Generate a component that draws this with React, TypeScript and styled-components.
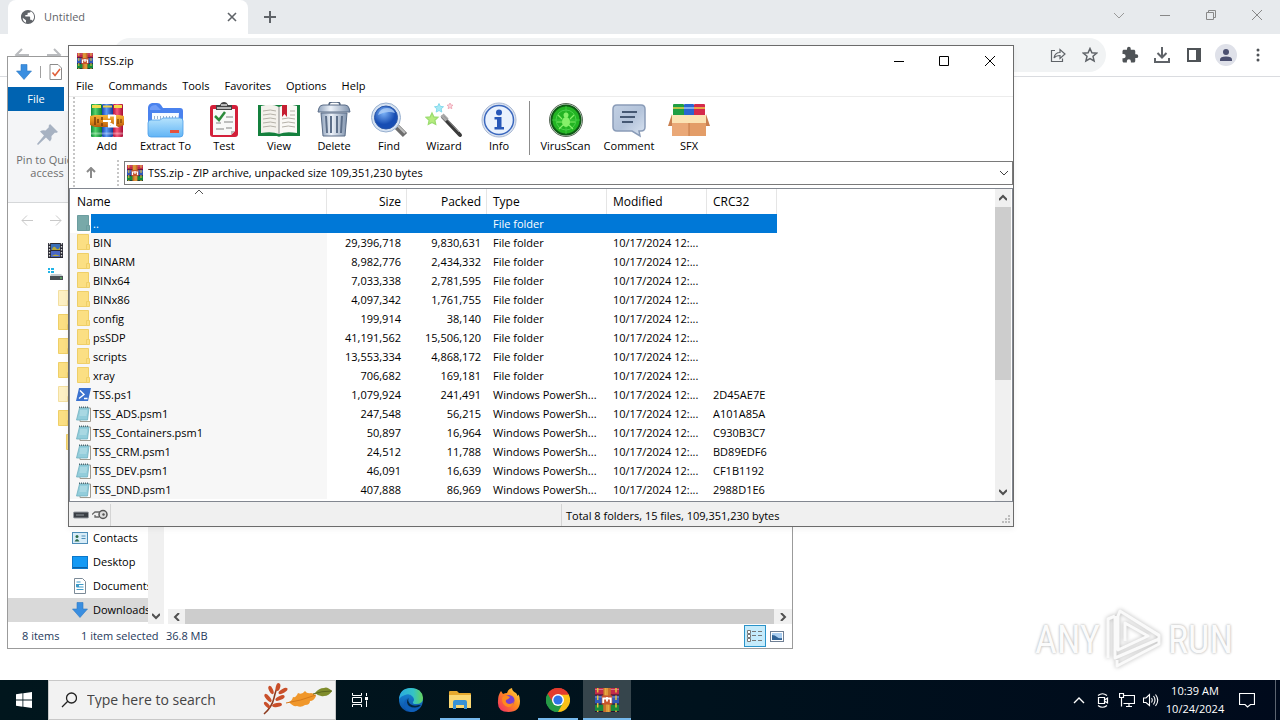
import React from "react";
import styled, { createGlobalStyle, css } from "styled-components";

const GlobalStyle = createGlobalStyle`
  * { box-sizing: border-box; }
  body {
    margin: 0;
    background: #fff;
    color: #000;
    font-family: "Open Sans", "Noto Sans", "Liberation Sans", sans-serif;
    font-size: 11px;
    line-height: 16px;
  }
  button, select, input {
    font: inherit;
    color: inherit;
    margin: 0;
    padding: 0;
    border: 0;
    border-radius: 0;
    background: none;
  }
  svg { display: block; flex: none; }
`;

/* ---------- desktop ---------- */

const Desktop = styled.div`
  position: relative;
  display: flex;
  flex-direction: column;
  min-height: 100vh;
  overflow: hidden;
`;

/* ---------- browser ---------- */

const Browser = styled.section`
  flex: 1;
  display: flex;
  flex-direction: column;
  background: #fff;
  color: #5f6368;
`;

const TabStrip = styled.header`
  display: flex;
  height: 34px;
  padding-left: 8px;
  background: #e7eaed;
`;

const Tab = styled.div`
  display: flex;
  align-items: center;
  gap: 8px;
  width: 240px;
  padding: 0 10px 0 12px;
  border-radius: 8px 8px 0 0;
  background: #fff;
`;

const TabTitle = styled.span`
  flex: 1;
`;

const IconButton = styled.button<{ $w: number; $h?: number }>`
  display: flex;
  align-items: center;
  justify-content: center;
  width: ${(p) => p.$w}px;
  height: ${(p) => p.$h ?? 30}px;
  flex: none;
`;

const Spacer = styled.div`
  flex: 1;
`;

const BrowserBar = styled.div`
  display: flex;
  align-items: center;
  height: 43px;
  padding: 0 6px;
  border-bottom: 1px solid #dadce0;
`;

const Omnibox = styled.div`
  flex: 1;
  display: flex;
  align-items: center;
  justify-content: flex-end;
  height: 34px;
  margin: 0 8px 0 11px;
  border-radius: 17px;
  background: #f1f3f4;
`;

const Avatar = styled.span`
  display: flex;
  align-items: center;
  justify-content: center;
  width: 22px;
  height: 22px;
  border-radius: 50%;
  background: #dfe1e9;
`;

const Watermark = styled.div`
  position: absolute;
  right: 47px;
  bottom: 46px;
  display: flex;
  align-items: center;
  gap: 5px;
  height: 68px;
  color: #fbfbfb;
  font-family: "Roboto Condensed", "Open Sans Condensed", "Liberation Sans", sans-serif;
  font-size: 38px;
  line-height: 40px;
  text-shadow: 0 0 3px #bbb, 0 0 2px #ccc;
`;

/* ---------- file explorer ---------- */

const Explorer = styled.section`
  position: absolute;
  left: 7px;
  top: 56px;
  width: 786px;
  display: flex;
  flex-direction: column;
  border: 1px solid #9b9b9b;
  background: #fff;
`;

const ExplorerTitle = styled.div`
  display: flex;
  align-items: center;
  gap: 8px;
  height: 30px;
  padding-left: 8px;
`;

const Divider = styled.span<{ $h: number; $c?: string }>`
  width: 1px;
  height: ${(p) => p.$h}px;
  background: ${(p) => p.$c ?? "#a0a0a0"};
`;

const FileTab = styled.button`
  width: 56px;
  height: 24px;
  background: #0063b1;
  color: #fff;
`;

const Ribbon = styled.div`
  height: 92px;
  border-bottom: 1px solid #d5d7d9;
  background: #f4f5f7;
`;

const PinButton = styled.button`
  display: flex;
  flex-direction: column;
  align-items: center;
  width: 78px;
  padding-top: 13px;
  color: #6d6d6d;
  line-height: 13px;

  svg { margin-bottom: 8px; }
`;

const ExplorerNav = styled.nav`
  display: flex;
  align-items: center;
  height: 35px;
  padding-left: 4px;
`;

const ExplorerBody = styled.div`
  display: flex;
  height: 386px;
`;

const Tree = styled.ul`
  width: 140px;
  margin: 0;
  padding: 0;
  list-style: none;
  overflow: hidden;
`;

const TreeItem = styled.li<{ $indent: number; $active?: boolean }>`
  display: flex;
  align-items: center;
  gap: 5px;
  height: 24px;
  padding-left: ${(p) => p.$indent}px;
  background: ${(p) => (p.$active ? "#d9d9d9" : "transparent")};
  white-space: nowrap;
`;

const TreeScroll = styled.div`
  display: flex;
  align-items: flex-end;
  width: 16px;
  background: #f0f0f0;
`;

const FilePane = styled.div`
  flex: 1;
  display: flex;
  flex-direction: column;
  justify-content: flex-end;
  padding-left: 4px;
`;

const HScroll = styled.div`
  display: flex;
  height: 15px;
  background: #f0f0f0;
`;

const HThumb = styled.div`
  flex: 1;
  background: #cdcdcd;
`;

const ExplorerStatus = styled.footer`
  display: flex;
  align-items: center;
  height: 24px;
  padding: 0 4px 0 14px;
  color: #1e395b;
`;

const StatusText = styled.span<{ $w: number }>`
  width: ${(p) => p.$w}px;
  white-space: nowrap;
`;

const ViewToggle = styled.button<{ $on?: boolean }>`
  display: flex;
  align-items: center;
  justify-content: center;
  width: 22px;
  height: 22px;
  ${(p) =>
    p.$on &&
    css`
      border: 1px solid #2a93c9;
      background: #c5ebfb;
    `}
`;

/* ---------- archive manager ---------- */

const Archive = styled.main`
  position: absolute;
  left: 68px;
  top: 45px;
  width: 946px;
  display: flex;
  flex-direction: column;
  border: 1px solid #6b6b6b;
  background: #fff;
  box-shadow: 0 2px 6px rgba(0, 0, 0, 0.06);
`;

const ArchiveTitle = styled.header`
  display: flex;
  align-items: center;
  height: 30px;
  padding-left: 8px;
`;

const TitleText = styled.h1`
  flex: 1;
  margin: 0 0 0 5px;
  font-size: 11px;
  font-weight: 400;
`;

const MenuBar = styled.nav`
  display: flex;
  gap: 15px;
  height: 21px;
  padding: 1px 7px 0;
  border-bottom: 1px solid #ececec;
`;

const MenuItem = styled.button`
  height: 18px;
`;

const ToolArea = styled.div`
  display: flex;
  padding-left: 4px;
`;

const Grip = styled.span<{ $h: number; $gap?: number }>`
  width: 2px;
  height: ${(p) => p.$h}px;
  margin-left: ${(p) => p.$gap ?? 0}px;
  flex: none;
  background: repeating-linear-gradient(#c6c6c6 0 2px, #fff 2px 4px);
`;

const ToolRows = styled.div`
  flex: 1;
  display: flex;
  flex-direction: column;
`;

const Toolbar = styled.div`
  display: flex;
  align-items: center;
  height: 62px;
  padding-left: 5px;
  gap: 1px;
`;

const ToolButton = styled.button<{ $w: number }>`
  display: flex;
  flex-direction: column;
  align-items: center;
  justify-content: space-between;
  width: ${(p) => p.$w}px;
  height: 52px;
  white-space: nowrap;
`;

const ToolDivider = styled.span`
  width: 1px;
  height: 54px;
  margin: 0 4px 0 2px;
  background: #8c8c8c;
`;

const AddressRow = styled.div`
  display: flex;
  align-items: center;
  height: 28px;
`;

const Address = styled.label`
  flex: 1;
  display: flex;
  align-items: center;
  height: 24px;
  margin-left: 5px;
  padding: 0 4px 0 2px;
  gap: 5px;
  border: 1px solid #7a7a7a;
`;

const PathSelect = styled.select`
  flex: 1;
  height: 22px;
  appearance: none;
  outline: 0;
`;

const ListFrame = styled.div`
  display: flex;
  border: 1px solid #828790;
  height: 314px;
`;

const ListArea = styled.div`
  flex: 1;
`;

const Table = styled.table`
  width: 707px;
  table-layout: fixed;
  border-collapse: separate;
  border-spacing: 0;
`;

const Th = styled.th<{ $right?: boolean }>`
  height: 25px;
  padding: ${(p) => (p.$right ? "0 5px 0 0" : "0 0 0 6px")};
  border-right: 1px solid #e5e5e5;
  font-size: 12px;
  font-weight: 400;
  text-align: ${(p) => (p.$right ? "right" : "left")};
`;

const NameHead = styled(Th)`
  position: relative;
  padding-left: 7px;
`;

const SortMark = styled.span`
  position: absolute;
  left: 125px;
  top: 0;
`;

const Row = styled.tr<{ $selected?: boolean }>`
  height: 19px;
  ${(p) =>
    p.$selected &&
    css`
      color: #fff;
      background: linear-gradient(to right, #fff 21px, #0078d7 21px);
    `}
`;

const Td = styled.td<{ $right?: boolean }>`
  height: 19px;
  padding: ${(p) => (p.$right ? "0 6px 0 0" : "0 0 0 6px")};
  text-align: ${(p) => (p.$right ? "right" : "left")};
  white-space: nowrap;
  line-height: 18px;
`;

const NameCell = styled(Td)<{ $selected?: boolean }>`
  padding: 0 0 0 6px;
  background: ${(p) => (p.$selected ? "transparent" : "#f7f7f7")};
`;

const NameInner = styled.span`
  display: flex;
  align-items: center;
  gap: 2px;
`;

const VScroll = styled.div`
  display: flex;
  flex-direction: column;
  width: 16px;
  margin-right: 1px;
  background: #f0f0f0;
`;

const VThumb = styled.div`
  height: 173px;
  background: #cdcdcd;
`;

const ArchiveStatus = styled.footer`
  display: flex;
  align-items: center;
  height: 24px;
  padding: 1px 2px 0 4px;
  background: #f0f0f0;
`;

const StatusIcons = styled.span`
  display: flex;
  align-items: center;
  gap: 3px;
  width: 37px;
`;

const StatusBlank = styled.span`
  flex: none;
  width: 450px;
`;

const StatusTotal = styled.span`
  flex: 1;
  padding: 2px 0 0 4px;
`;

/* ---------- taskbar ---------- */

const Taskbar = styled.footer`
  position: relative;
  display: flex;
  height: 40px;
  background: linear-gradient(to right, #01161d, #00121d 55%, #000a1c);
  color: #fff;
`;

const SearchBox = styled.label`
  display: flex;
  align-items: center;
  width: 288px;
  padding: 0 2px 0 12px;
  gap: 10px;
  border: 1px solid #c8c8c8;
  background: #f2f2f2;
  color: #2b2b2b;
`;

const SearchInput = styled.input`
  flex: 1;
  min-width: 0;
  outline: 0;
  font-size: 14px;

  &::placeholder { color: #444; opacity: 1; }
`;

const TaskGroup = styled.div`
  display: flex;
  gap: 1px;
  margin-left: 3px;
`;

const Task = styled.button<{ $open?: boolean; $active?: boolean }>`
  display: flex;
  align-items: center;
  justify-content: center;
  width: 48px;
  height: 40px;
  background: ${(p) => (p.$active ? "#36454c" : "transparent")};
  ${(p) =>
    p.$open &&
    css`
      background-image: linear-gradient(#76b9ed, #76b9ed);
      background-repeat: no-repeat;
      background-position: center bottom;
      background-size: ${p.$active ? 48 : 40}px 2px;
    `}
`;

const Clock = styled.time`
  display: flex;
  flex-direction: column;
  justify-content: center;
  width: 64px;
  text-align: center;
  line-height: 18px;
`;

const PeekEdge = styled.span`
  width: 5px;
  margin-left: 8px;
  border-left: 1px solid #5c6470;
`;

/* ---------- icons ---------- */

type LineProps = {
  d: string;
  size?: number;
  w?: number;
  color?: string;
};

const Line = ({ d, size = 12, w = 1, color = "currentColor" }: LineProps) => (
  <svg width={size} height={size} viewBox={`0 0 ${size} ${size}`} fill="none" stroke={color} strokeWidth={w}>
    <path d={d} />
  </svg>
);

const Globe = () => (
  <svg width="16" height="16" viewBox="0 0 24 24" fill="#5f6368">
    <path d="M12 1.500C6.200 1.500 1.500 6.200 1.500 12S6.200 22.500 12 22.500 22.500 17.800 22.500 12 17.800 1.500 12 1.500zM4 13l5 4v3.500C6 19.600 4 16.600 4 13zm14.500 4.700c-.4-1-1.200-1.700-2.300-1.700h-1v-3.500c0-.7-.5-1.200-1.200-1.200H8V9h2.300c.7 0 1.200-.5 1.200-1.200V5.500h2.300c1.300 0 2.300-1 2.300-2 3 1.500 5 4.700 5 8.500 0 2.200-1 4.300-2.600 5.700z" />
  </svg>
);

const Books = ({ size }: { size: number }) => (
  <svg width={size} height={size} viewBox="0 0 16 16">
    <rect x="0" y="0" width="16" height="5" fill="#c02a4b" />
    <rect x="0" y="5" width="16" height="6" fill="#3158b8" />
    <rect x="0" y="11" width="16" height="5" fill="#188a3c" />
    <path d="M0 1h16M0 6h16" stroke="#fff" strokeOpacity=".35" strokeWidth=".7" />
    <path d="M0 4.700h16M0 10.600h16M0 15.700h16" stroke="#2a1030" strokeWidth=".7" />
    <path d="M1.800 0v16M14 0v16" stroke="#e8c23a" strokeWidth="1" strokeDasharray="3 2" />
    <rect x="5.500" y="0" width="5" height="16" fill="#c9702a" />
    <path d="M6.800 0v5M8 0v16M9.200 11v5" stroke="#f2c14b" strokeWidth=".7" />
    <rect x="4.500" y="5" width="7" height="6" fill="#c7552d" />
    <path d="M5.500 10V7h5v3M8 6v3" fill="none" stroke="#fff" strokeWidth="1.200" />
  </svg>
);

const AddIcon = () => (
  <svg width="36" height="36" viewBox="0 0 36 36">
    <defs>
      <linearGradient id="bg"><stop stopColor="#0b8a3c" /><stop offset=".4" stopColor="#57d46b" /><stop offset="1" stopColor="#067a34" /></linearGradient>
      <linearGradient id="bb"><stop stopColor="#1740b0" /><stop offset=".4" stopColor="#5c9bf5" /><stop offset="1" stopColor="#123a9a" /></linearGradient>
      <linearGradient id="br"><stop stopColor="#b0103a" /><stop offset=".4" stopColor="#f65a7c" /><stop offset="1" stopColor="#a80d35" /></linearGradient>
      <linearGradient id="belt" x2="0" y2="1"><stop stopColor="#f6b83a" /><stop offset=".5" stopColor="#e08a1c" /><stop offset="1" stopColor="#b85c0e" /></linearGradient>
    </defs>
    <rect x="2" y="2" width="11" height="33" rx="1" fill="url(#bg)" />
    <rect x="13" y="2" width="11" height="33" rx="1" fill="url(#bb)" />
    <rect x="24" y="2" width="10" height="33" rx="1" fill="url(#br)" />
    <path d="M3 4.500h9M25 4.500h8" stroke="#f2dc4a" strokeWidth="3" />
    <path d="M14 4.500h9" stroke="#e9cf4a" strokeWidth="2" />
    <path d="M2 31.500h32" stroke="#fff" strokeOpacity=".35" strokeWidth="2" />
    <path d="M1 14l5-1h24l5 1v9l-5 2H6l-5-2z" fill="url(#belt)" />
    <path d="M6 15v8M9 17v4M13 15v3M13 21v3" stroke="#7a3d08" strokeWidth="1.500" />
    <path d="M26 13.500h-6v3M20 21v3.500h6zM26 13v12" fill="none" stroke="#fff" strokeWidth="2.200" />
    <path d="M14 19h8" stroke="#fff" strokeWidth="2" />
    <path d="M29 17v5M32 17v4" stroke="#7a3d08" strokeWidth="1.200" />
  </svg>
);

const ExtractIcon = () => (
  <svg width="38" height="36" viewBox="0 0 38 36">
    <defs><linearGradient id="ef" x2="0" y2="1"><stop stopColor="#b5e2fc" /><stop offset="1" stopColor="#62b5f6" /></linearGradient></defs>
    <path d="M1 6q0-4 4-5h5q3 0 4 2l2 3h17q3 0 3 3v18H1z" fill="#4a82ee" />
    <path d="M3 6q1-3 6-3l5 5H3z" fill="#6f9df7" />
    <path d="M5 11h27l-1 11H5z" fill="#f7fbff" />
    <path d="M7.500 14v3M10.500 14v3M13.500 14v3M16.500 14v3M19.500 14v3M22.500 14v3M25.500 14v3M28.500 14v3" stroke="#9ab0cc" />
    <path d="M1 21q0-3 3-3h9l3-2h17q3 0 3 3v13q0 3-3 3H4q-3 0-3-3z" fill="url(#ef)" stroke="#4a9de8" strokeWidth=".8" />
    <rect x="23" y="28" width="9" height="3" fill="#e4513d" />
  </svg>
);

const TestIcon = () => (
  <svg width="36" height="36" viewBox="0 0 36 36">
    <rect x="4" y="3" width="28" height="32" rx="3" fill="#d31f39" />
    <path d="M7 7h22v22l-4 4H7z" fill="#f8f8f8" />
    <path d="M29 29h-4v4z" fill="#bbb" />
    <path d="M10 3h4q1-3 4-3t4 3h4v5H10z" fill="#444" />
    <path d="M11 6h14M15 3h6" stroke="#ddd" strokeWidth="1.500" />
    <path d="M9 14l4 4 6-8" fill="none" stroke="#2c8a3b" strokeWidth="2.500" />
    <path d="M20 15h7M18 20h9M10 21h5M10 27h8M20 26h6" stroke="#a9a9a9" strokeWidth="1.500" />
  </svg>
);

const ViewIcon = () => (
  <svg width="44" height="36" viewBox="0 0 44 36">
    <path d="M1 3h42v31H24q-2 1.500-4 0H1z" fill="#14803d" />
    <path d="M4 4q11-3 18 1v27q-7-3-18-1z" fill="#f3f1ec" />
    <path d="M40 4q-11-3-18 1v27q7-3 18-1z" fill="#faf9f6" />
    <path d="M22 5v27" stroke="#888" />
    <path d="M6 9q8-2 13 0M6 13q8-2 13 0M6 17q8-2 13 0M6 21q8-2 13 0M6 25q8-2 13 0M25 17q6-2 13 0M25 21q6-2 13 0M25 25q6-2 13 0M33 9h5M33 13h5" fill="none" stroke="#b5b1a8" />
    <path d="M25 3h5v12l-2.500-3L25 15z" fill="#c61f32" />
  </svg>
);

const TrashIcon = () => (
  <svg width="36" height="36" viewBox="0 0 36 36">
    <defs><linearGradient id="tr"><stop stopColor="#8fa2bb" /><stop offset=".4" stopColor="#eef3fa" /><stop offset="1" stopColor="#8093ad" /></linearGradient></defs>
    <path d="M13 3q0-3 3-3h5q3 0 3 3" fill="none" stroke="#53657f" strokeWidth="1.500" />
    <path d="M3 6q1-3 4-3h22q3 0 4 3l1 4H2z" fill="url(#tr)" stroke="#5b6d87" />
    <path d="M5 11h26l-2 23H7z" fill="url(#tr)" stroke="#5b6d87" />
    <path d="M10 14l1 17M15 14v17M21 14v17M26 14l-1 17" stroke="#5d6f89" strokeWidth="2" />
  </svg>
);

const FindIcon = () => (
  <svg width="38" height="36" viewBox="0 0 38 36">
    <defs><radialGradient id="fi" cx=".4" cy=".3"><stop stopColor="#7bb2f7" /><stop offset="1" stopColor="#174db3" /></radialGradient></defs>
    <path d="M26 24l9 9" stroke="#6d6d6d" strokeWidth="6" />
    <path d="M27 23l8 8" stroke="#bdbdbd" strokeWidth="2" />
    <circle cx="16" cy="15.500" r="14.500" fill="#d7e3f2" stroke="#98b0d0" />
    <circle cx="16" cy="15.500" r="11.500" fill="url(#fi)" stroke="#2b57a8" />
    <path d="M8 13q2-7 9-7 6 0 8 5-8-3-17 2z" fill="#bcd9fb" opacity=".7" />
  </svg>
);

const star = "M0-5l1.500 3.200 3.500.4-2.600 2.400.7 3.500L0 2.800l-3.100 1.700.7-3.500L-5-1.400l3.500-.4z";

const WizardIcon = () => (
  <svg width="38" height="36" viewBox="0 0 38 36">
    <path d="M18 15l17 18" stroke="#3b3b3b" strokeWidth="4" strokeLinecap="round" />
    <path d="M17 13l5 5" stroke="#a9a9a9" strokeWidth="4.500" />
    <path d="M19 14l15 16" stroke="#999" strokeWidth="1" />
    <path d={star} transform="translate(7 17) scale(1.200)" fill="#b6ec7e" stroke="#9bdc70" />
    <path d={star} transform="translate(14 6) scale(.9)" fill="#a6e9f5" stroke="#7dd6ea" />
    <path d={star} transform="translate(25 4) scale(.6)" fill="#fbd6dd" stroke="#e88a9c" />
  </svg>
);

const InfoIcon = () => (
  <svg width="36" height="36" viewBox="0 0 36 36">
    <circle cx="18" cy="18" r="17" fill="#dde5f2" stroke="#aab9d3" />
    <circle cx="18" cy="18" r="14.500" fill="#eaf2fd" stroke="#3b68be" strokeWidth="1.500" />
    <circle cx="18" cy="10.500" r="3" fill="#2757b8" />
    <path d="M13.500 15h7v10h2.500v2.500h-9.500V25H16v-7.500h-2.500z" fill="#2757b8" />
  </svg>
);

const VirusIcon = () => (
  <svg width="36" height="36" viewBox="0 0 36 36">
    <circle cx="18" cy="18" r="16.500" fill="#d7e0d7" stroke="#5a6b5a" />
    <circle cx="18" cy="18" r="14.500" fill="#23b423" stroke="#0d5a14" strokeWidth="2" />
    <circle cx="18" cy="18" r="10" fill="none" stroke="#4bd04b" />
    <path d="M4 18h28M18 4v28" stroke="#4bd04b" strokeWidth=".7" />
    <ellipse cx="18" cy="20" rx="4" ry="5" fill="#86f06a" />
    <circle cx="18" cy="13" r="2.500" fill="#86f06a" />
    <path d="M14 17l-4-4M22 17l4-4M14 20H9M22 20h5M15 23l-4 4M21 23l4 4" stroke="#86f06a" strokeWidth="1.200" />
  </svg>
);

const CommentIcon = () => (
  <svg width="36" height="36" viewBox="0 0 36 36">
    <defs><linearGradient id="cm" x2="1" y2="1"><stop stopColor="#c2d0e3" /><stop offset=".5" stopColor="#b3c3da" /><stop offset="1" stopColor="#dbe5f2" /></linearGradient></defs>
    <path d="M6 3h24q4 0 4 4v18q0 4-4 4h-2l1 5-8-5H6q-4 0-4-4V7q0-4 4-4z" fill="url(#cm)" stroke="#8a9cb8" strokeWidth="1.500" />
    <path d="M11 10h15M9 15h15M11 20h11" stroke="#455873" strokeWidth="1.800" />
  </svg>
);

const SfxIcon = () => (
  <svg width="42" height="36" viewBox="0 0 42 36">
    <rect x="5" y="2" width="11" height="13" rx="1" fill="#1f9e44" />
    <rect x="16" y="2" width="10" height="13" rx="1" fill="#2a66d0" />
    <rect x="26" y="2" width="11" height="13" rx="1" fill="#d52a4c" />
    <path d="M5 6h11M26 6h11" stroke="#f0d24a" strokeWidth="1.500" />
    <path d="M16 6h10" stroke="#9ec6fa" strokeWidth="1.500" />
    <path d="M4 13h34v10H4z" fill="#fbe3b4" />
    <path d="M4 21h34v13H4z" fill="#eaa877" />
    <path d="M21 21h17v13H21z" fill="#e39d68" />
    <path d="M4 12v12H0zM38 12v12h4z" fill="#c98050" />
    <path d="M21 21v13" stroke="#c57a48" />
  </svg>
);

const Folder = ({ tone = "#fbdf83", edge = "#efcf68" }: { tone?: string; edge?: string }) => (
  <svg width="15" height="17" viewBox="0 0 15 17">
    <path d="M1.500 .5h11v15h-11z" fill={tone} stroke={edge} />
    <path d="M10.500 10.500h3v5h-3z" fill={tone} stroke={edge} />
  </svg>
);

const PowerShell = () => (
  <svg width="15" height="13" viewBox="0 0 15 13">
    <path d="M3 0h12l-3 13H0z" fill="#3b72cf" />
    <path d="M4 2.500l4 4-5 4M8 10.500h3.500" fill="none" stroke="#fff" strokeWidth="1.400" />
  </svg>
);

const Notebook = () => (
  <svg width="15" height="16" viewBox="0 0 15 16">
    <path d="M4 2h10.500v13.500H4z" fill="#fff" stroke="#a09b90" />
    <path d="M3.500 2h9.500L11.500 14H.5z" fill="#93cddb" stroke="#6fb0c0" strokeWidth=".8" />
    <path d="M3 1.200h10" stroke="#4c6d78" strokeWidth="1.500" strokeDasharray="1 1" />
    <path d="M4 5h7M4 7h7M3.500 9h7" stroke="#bfe3ea" />
  </svg>
);

const Arrow = () => (
  <svg width="16" height="16" viewBox="0 0 16 16">
    <path d="M5 .5h6V7h4.500L8 15.500.5 7H5z" fill="#3a8ee0" stroke="#2d79c4" strokeWidth=".6" />
  </svg>
);

const CheckDoc = () => (
  <svg width="13" height="16" viewBox="0 0 13 16">
    <path d="M1 .5h8L12.500 4v11.500H1z" fill="#fff" stroke="#8b8b8b" />
    <path d="M3.500 8.500l2.500 3L11 5" fill="none" stroke="#e0603a" strokeWidth="1.600" />
  </svg>
);

const Pin = () => (
  <svg width="21" height="21" viewBox="0 0 21 21">
    <path d="M13 0l8 8-2 1-1-.5-3.500 3.500q.8 3-1.500 5.500l-4-4L1 21l-1-1 7-8.500-4-4Q5.500 5.500 8.500 6.500L12 3l-.5-1z" fill="#a7b2c2" />
  </svg>
);

const Video = () => (
  <svg width="15" height="15" viewBox="0 0 15 15">
    <rect width="15" height="15" fill="#2b2b35" />
    <path d="M1.500 0v15M13.500 0v15" stroke="#d8d8d8" strokeWidth="1.300" strokeDasharray="1.500 1.500" />
    <rect x="3" y="1" width="9" height="6" fill="#3a6fb8" />
    <rect x="3" y="8" width="9" height="6" fill="#4a67c4" />
    <path d="M4 6q2-4 4-1t4-1v3H4zM4 13q3-3 8 0z" fill="#b5a83a" />
  </svg>
);

const Drive = () => (
  <svg width="16" height="15" viewBox="0 0 16 15">
    <path d="M0 1h2v2H0zM3 1h3v2H3zM0 4h2v2H0zM3 4h3v2H3z" fill="#20b4e8" />
    <path d="M3 7h10l2 2H2z" fill="#c5cbd0" />
    <path d="M2 9h13v4H2z" fill="#4a5055" />
    <path d="M12 11h2" stroke="#67e36a" />
  </svg>
);

const Contacts = () => (
  <svg width="16" height="12" viewBox="0 0 16 12">
    <rect x=".5" y=".5" width="15" height="11" fill="#d7ecf8" stroke="#4d8db8" />
    <circle cx="5" cy="4.500" r="1.500" fill="#2d6b4c" />
    <path d="M2.500 9.500Q5 4.500 7.500 9.500z" fill="#2d6b4c" />
    <path d="M9.500 4h4M9.500 6.500h4" stroke="#4d8db8" />
  </svg>
);

const DesktopIcon = () => (
  <svg width="16" height="13" viewBox="0 0 16 13">
    <rect x=".5" y=".5" width="15" height="12" fill="#1299f5" stroke="#0b77c9" />
    <path d="M1 11.500h14" stroke="#0b5fa5" />
  </svg>
);

const DocIcon = () => (
  <svg width="16" height="16" viewBox="0 0 16 16">
    <path d="M2.500.5h8l3 3v12h-11z" fill="#fff" stroke="#7c8b98" />
    <path d="M4.500 4h4M4.500 6.500h7M4.500 9h7M4.500 11.500h7" stroke="#3e9bc9" />
    <path d="M4 6h3v3H4z" fill="#3e9bc9" />
  </svg>
);

const ListViewIcon = () => (
  <svg width="16" height="14" viewBox="0 0 16 14" fill="none" stroke="#777">
    <path d="M.5 1.500h3v3h-3zM.5 5.500h3v3h-3zM.5 9.500h3v3h-3z" fill="#fff" />
    <path d="M5 2.500h4M11 2.500h4M5 6.500h4M11 6.500h4M5 11.500h4M11 11.500h4" />
  </svg>
);

const ThumbViewIcon = () => (
  <svg width="14" height="11" viewBox="0 0 14 11">
    <rect x=".5" y=".5" width="13" height="10" fill="#fff" stroke="#6f7f94" />
    <path d="M2 2h10v7H2z" fill="#a9cdf0" />
    <path d="M2 4q3 0 5 2t5 1v2H2z" fill="#2f6296" />
  </svg>
);

const Leaves = () => (
  <svg width="70" height="34" viewBox="0 0 70 34">
    <path d="M1 31Q9 24 11 15T15 3" fill="none" stroke="#8c3a1e" strokeWidth="1.500" />
    <g fill="#c94f2a">
      <ellipse cx="15" cy="4" rx="2.200" ry="4" transform="rotate(15 15 4)" />
      <ellipse cx="8" cy="7" rx="2" ry="4.500" transform="rotate(-25 8 7)" />
      <ellipse cx="20" cy="8" rx="2" ry="5" transform="rotate(60 20 8)" />
      <ellipse cx="5" cy="15" rx="2" ry="5" transform="rotate(-40 5 15)" />
      <ellipse cx="17" cy="15" rx="2" ry="5" transform="rotate(65 17 15)" />
      <ellipse cx="4" cy="22" rx="1.800" ry="4" transform="rotate(-45 4 22)" />
      <ellipse cx="14" cy="22" rx="2" ry="5" transform="rotate(80 14 22)" />
    </g>
    <path d="M26 19q3-1 4-5 3 1 5-4 4 2 7-2 2 3 6 2 3 0 5 3-2 5-6 5 0 4-5 4-4 3-8 1-4 1-8-4z" fill="#f0972b" />
    <path d="M23 20q14-2 30-8" fill="none" stroke="#d57a1c" />
    <path d="M52 10q4-5 9-5 3-2 8 3-3 5-8 5-5 1-9-3z" fill="#7f8c2c" />
    <path d="M50 11q8-3 19-3" fill="none" stroke="#5c671d" />
  </svg>
);

const TaskView = () => (
  <svg width="18" height="16" viewBox="0 0 18 16" fill="none" stroke="#fff">
    <path d="M1.500 1V3.500h9V1M1.500 15v-2.500h9V15M1.500 5.500h9v5h-9zM15.500 1v3M15.500 8.500V15" />
    <path d="M14 5h3v3h-3z" fill="#fff" stroke="none" />
  </svg>
);

const Edge = () => (
  <svg width="24" height="24" viewBox="0 0 24 24">
    <defs>
      <linearGradient id="e1" x2="1"><stop stopColor="#2aa9e0" /><stop offset=".6" stopColor="#35c3c5" /><stop offset="1" stopColor="#65d35a" /></linearGradient>
      <linearGradient id="e2" x2="0" y2="1"><stop stopColor="#1b8fdc" /><stop offset="1" stopColor="#0b4fa5" /></linearGradient>
    </defs>
    <circle cx="12" cy="12" r="12" fill="url(#e2)" />
    <path d="M0 11Q1 0 12 0q11 0 12 10 0 6-7 6-4 0-3-2 2-2 0-5-3-4-8-2-4 1-6 4z" fill="url(#e1)" />
    <path d="M9 10q-2 5 2 9 5 3 11-1-4 6-10 6-7-2-7-8 0-4 4-6z" fill="#0f5fb8" />
    <path d="M10 9.500q-2 3 1 6.500 4 3 9 1l2 .5q-3 2-6 2-7 0-8-5 0-3 2-5z" fill="#03253d" />
  </svg>
);

const ExplorerIcon = () => (
  <svg width="22" height="20" viewBox="0 0 22 20">
    <path d="M0 2q0-1 1-1h7l2 2h11q1 0 1 1v14H0z" fill="#e6a92e" />
    <path d="M0 5h22v13H0z" fill="#fbd873" />
    <path d="M4 18v-6q0-2 2-2h10q2 0 2 2v7h-3v-4H7v4H4z" fill="#3a93d6" />
  </svg>
);

const Firefox = () => (
  <svg width="24" height="24" viewBox="0 0 24 24">
    <defs><linearGradient id="ff" x1="1" x2="0" y2="1"><stop stopColor="#ffe14a" /><stop offset=".45" stopColor="#ff8a1e" /><stop offset="1" stopColor="#f0246b" /></linearGradient></defs>
    <path d="M4 3l2 3q2-1 4-1 1-4 5-5 0 3 4 5 1 1 1.500 3l1-1.500Q23 9 23 13q0 11-11.500 11T1 13Q1 7 4 3z" fill="url(#ff)" />
    <circle cx="12" cy="12.500" r="5.500" fill="#7a3fd1" />
    <path d="M5 10q2-3 6-2l2 1q-2 3-4 3-1 3 3 4 4 0 5-3-1 6-6 6-6-1-6-9z" fill="#ff8a1e" />
  </svg>
);

const ChromeIcon = () => (
  <svg width="24" height="24" viewBox="0 0 24 24">
    <path d="M12 12L1.600 6A12 12 0 0 1 22.400 6z" fill="#e33b2e" />
    <path d="M12 12L22.400 6A12 12 0 0 1 12 24z" fill="#fbc116" />
    <path d="M12 12v12A12 12 0 0 1 1.600 6z" fill="#269a46" />
    <path d="M12 6.500H22.600L17 15z" fill="#fbc116" />
    <path d="M12 6.500h10.600L22.400 6A12 12 0 0 0 1.600 6L7 15z" fill="#e33b2e" />
    <path d="M17 15l-5 9A12 12 0 0 1 1.600 6L7 15z" fill="#269a46" />
    <circle cx="12" cy="12" r="6" fill="#fff" />
    <circle cx="12" cy="12" r="4.600" fill="#2f73e8" />
  </svg>
);

const LogoArt = styled.svg`
  filter: drop-shadow(0 0 2px #b5b5b5);
`;

const RunLogo = () => (
  <LogoArt width="58" height="64" viewBox="0 0 58 64" fill="none" stroke="#fafafa" strokeWidth="3">
    <path d="M3 50V11L10 8M15 3l38 24M10 8v42l44-19M12 52v6l42-22v-9L15 3l-2 5v34l30-14L20 15v18" strokeLinejoin="round" />
  </LogoArt>
);

/* ---------- data ---------- */

type Entry = { name: string; kind: "up" | "dir" | "ps" | "mod"; size?: string; packed?: string; crc?: string };

const entries: Entry[] = [
  { name: "..", kind: "up" },
  { name: "BIN", kind: "dir", size: "29,396,718", packed: "9,830,631" },
  { name: "BINARM", kind: "dir", size: "8,982,776", packed: "2,434,332" },
  { name: "BINx64", kind: "dir", size: "7,033,338", packed: "2,781,595" },
  { name: "BINx86", kind: "dir", size: "4,097,342", packed: "1,761,755" },
  { name: "config", kind: "dir", size: "199,914", packed: "38,140" },
  { name: "psSDP", kind: "dir", size: "41,191,562", packed: "15,506,120" },
  { name: "scripts", kind: "dir", size: "13,553,334", packed: "4,868,172" },
  { name: "xray", kind: "dir", size: "706,682", packed: "169,181" },
  { name: "TSS.ps1", kind: "ps", size: "1,079,924", packed: "241,491", crc: "2D45AE7E" },
  { name: "TSS_ADS.psm1", kind: "mod", size: "247,548", packed: "56,215", crc: "A101A85A" },
  { name: "TSS_Containers.psm1", kind: "mod", size: "50,897", packed: "16,964", crc: "C930B3C7" },
  { name: "TSS_CRM.psm1", kind: "mod", size: "24,512", packed: "11,788", crc: "BD89EDF6" },
  { name: "TSS_DEV.psm1", kind: "mod", size: "46,091", packed: "16,639", crc: "CF1B1192" },
  { name: "TSS_DND.psm1", kind: "mod", size: "407,888", packed: "86,969", crc: "2988D1E6" },
];

const tools = [
  { label: "Add", w: 54, icon: <AddIcon /> },
  { label: "Extract To", w: 61, icon: <ExtractIcon /> },
  { label: "Test", w: 54, icon: <TestIcon /> },
  { label: "View", w: 54, icon: <ViewIcon /> },
  { label: "Delete", w: 54, icon: <TrashIcon /> },
  { label: "Find", w: 54, icon: <FindIcon /> },
  { label: "Wizard", w: 54, icon: <WizardIcon /> },
  { label: "Info", w: 54, icon: <InfoIcon /> },
];

const extraTools = [
  { label: "VirusScan", w: 61, icon: <VirusIcon /> },
  { label: "Comment", w: 64, icon: <CommentIcon /> },
  { label: "SFX", w: 54, icon: <SfxIcon /> },
];

const pale = { tone: "#fdf0c4", edge: "#f3dfa0" };

const tree: { indent: number; icon: React.ReactNode; label?: string; active?: boolean }[] = [
  { indent: 40, icon: <Video /> },
  { indent: 40, icon: <Drive /> },
  { indent: 49, icon: <Folder {...pale} /> },
  { indent: 49, icon: <Folder /> },
  { indent: 49, icon: <Folder /> },
  { indent: 49, icon: <Folder /> },
  { indent: 49, icon: <Folder {...pale} /> },
  { indent: 49, icon: <Folder /> },
  { indent: 57, icon: <Folder /> },
  { indent: 64, icon: <Folder /> },
  { indent: 64, icon: <Folder /> },
  { indent: 64, icon: <Folder /> },
  { indent: 64, icon: <Contacts />, label: "Contacts" },
  { indent: 64, icon: <DesktopIcon />, label: "Desktop" },
  { indent: 64, icon: <DocIcon />, label: "Documents" },
  { indent: 64, icon: <Arrow />, label: "Downloads", active: true },
];

const entryIcon = (kind: Entry["kind"]) => {
  if (kind === "up") return <Folder tone="#78a9a9" edge="#6c9d9f" />;
  if (kind === "dir") return <Folder />;
  return kind === "ps" ? <PowerShell /> : <Notebook />;
};

/* ---------- windows ---------- */

const BrowserWindow = () => (
  <Browser>
    <TabStrip>
      <Tab>
        <Globe />
        <TabTitle>Untitled</TabTitle>
        <IconButton $w={12} $h={16} aria-label="Close tab"><Line d="M2 2l8 8M10 2l-8 8" w={1.6} /></IconButton>
      </Tab>
      <IconButton $w={44} $h={34} aria-label="New tab"><Line d="M6 0v12M0 6h12" w={2} /></IconButton>
      <Spacer />
      <IconButton $w={46} aria-label="Search tabs"><Line d="M1 4l5 5 5-5" color="#999" /></IconButton>
      <IconButton $w={46} aria-label="Minimize"><Line d="M1 6.500h10" color="#888" /></IconButton>
      <IconButton $w={46} aria-label="Restore"><Line d="M1.500 3.500h7v7h-7zM3.500 3V1.500h7v7H9" color="#888" /></IconButton>
      <IconButton $w={46} aria-label="Close"><Line d="M1 1l10 10M11 1L1 11" color="#888" /></IconButton>
    </TabStrip>
    <BrowserBar>
      <IconButton $w={32} aria-label="Back"><Line size={16} d="M15 8H2M8 2L2 8l6 6" w={2} color="#b9bbbe" /></IconButton>
      <IconButton $w={32} aria-label="Forward"><Line size={16} d="M1 8h13M8 2l6 6-6 6" w={2} color="#b9bbbe" /></IconButton>
      <IconButton $w={32} aria-label="Reload"><Line size={16} d="M13 5a6 6 0 1 0 1 4" w={2} /></IconButton>
      <Omnibox>
        <IconButton $w={32} aria-label="Share">
          <Line size={16} d="M5 3.500H1.500v11h11v-3M4 11q1-5.500 6-5.500V2.500L15 7l-5 4.500v-3q-4 0-6 2.500z" w={1.2} />
        </IconButton>
        <IconButton $w={32} aria-label="Bookmark">
          <Line size={16} d="M8 1.500l1.900 4.300 4.700.4-3.600 3.100 1.100 4.600L8 11.500l-4.100 2.400L5 9.300 1.400 6.200l4.700-.4z" w={1.5} />
        </IconButton>
      </Omnibox>
      <IconButton $w={32} aria-label="Extensions">
        <svg width="18" height="18" viewBox="0 0 24 24" fill="#4f5357">
          <path d="M20.500 11H19V7c0-1.100-.9-2-2-2h-4V3.500a2.500 2.500 0 0 0-5 0V5H4c-1.100 0-2 .9-2 2v3.800h1.500a2.700 2.700 0 0 1 0 5.400H2V20c0 1.100.9 2 2 2h3.800v-1.500a2.700 2.700 0 0 1 5.400 0V22H17c1.100 0 2-.9 2-2v-4h1.500a2.500 2.500 0 0 0 0-5z" />
        </svg>
      </IconButton>
      <IconButton $w={32} aria-label="Downloads"><Line size={16} d="M8 0v10M3.500 6L8 10.500 12.500 6M1 11v4h14v-4" w={2} /></IconButton>
      <IconButton $w={32} aria-label="Side panel">
        <svg width="14" height="14" viewBox="0 0 14 14"><path d="M1 1h12v12H1z" fill="none" stroke="#4f5357" strokeWidth="2" /><path d="M9 1h4v12H9z" fill="#4f5357" /></svg>
      </IconButton>
      <IconButton $w={32} aria-label="Profile">
        <Avatar><svg width="12" height="12" viewBox="0 0 12 12" fill="#4b5070"><circle cx="6" cy="3" r="3" /><path d="M0 12v-1.500Q0 7.500 6 7.500t6 3V12z" /></svg></Avatar>
      </IconButton>
      <IconButton $w={32} aria-label="Menu">
        <svg width="4" height="14" viewBox="0 0 4 14" fill="#4f5357"><circle cx="2" cy="2" r="1.500" /><circle cx="2" cy="7" r="1.500" /><circle cx="2" cy="12" r="1.500" /></svg>
      </IconButton>
    </BrowserBar>
  </Browser>
);

const ExplorerWindow = () => (
  <Explorer aria-label="Downloads">
    <ExplorerTitle>
      <Arrow />
      <Divider $h={12} />
      <CheckDoc />
    </ExplorerTitle>
    <FileTab>File</FileTab>
    <Ribbon>
      <PinButton>
        <Pin />
        <span>Pin to Quick</span>
        <span>access</span>
      </PinButton>
    </Ribbon>
    <ExplorerNav>
      <IconButton $w={29} aria-label="Back"><Line d="M12 5.500H1M6 .5l-5 5 5 5" color="#c9c9c9" /></IconButton>
      <IconButton $w={29} aria-label="Forward"><Line d="M0 5.500h11M6 .5l5 5-5 5" color="#c9c9c9" /></IconButton>
    </ExplorerNav>
    <ExplorerBody>
      <Tree>
        {tree.map((t, i) => (
          <TreeItem key={i} $indent={t.indent} $active={t.active}>
            {t.icon}
            {t.label}
          </TreeItem>
        ))}
      </Tree>
      <TreeScroll>
        <IconButton $w={16} $h={16} aria-label="Scroll down"><Line size={8} d="M0 2l4 4 4-4" w={2} color="#505050" /></IconButton>
      </TreeScroll>
      <FilePane>
        <HScroll>
          <IconButton $w={17} $h={15} aria-label="Scroll left"><Line size={8} d="M6 0L2 4l4 4" w={2} color="#505050" /></IconButton>
          <HThumb />
          <IconButton $w={18} $h={15} aria-label="Scroll right"><Line size={8} d="M2 0l4 4-4 4" w={2} color="#505050" /></IconButton>
        </HScroll>
      </FilePane>
    </ExplorerBody>
    <ExplorerStatus>
      <StatusText $w={59}>8 items</StatusText>
      <StatusText $w={85}>1 item selected</StatusText>
      <StatusText $w={60}>36.8 MB</StatusText>
      <Spacer />
      <ViewToggle $on aria-label="Details view"><ListViewIcon /></ViewToggle>
      <ViewToggle aria-label="Thumbnail view"><ThumbViewIcon /></ViewToggle>
    </ExplorerStatus>
  </Explorer>
);

const ArchiveWindow = () => (
  <Archive>
    <ArchiveTitle>
      <Books size={16} />
      <TitleText>TSS.zip</TitleText>
      <IconButton $w={46} aria-label="Minimize"><Line d="M1 6.500h10" /></IconButton>
      <IconButton $w={45} aria-label="Maximize"><Line d="M.5 1.500h9v9h-9z" /></IconButton>
      <IconButton $w={46} aria-label="Close"><Line d="M1 1l10 10M11 1L1 11" /></IconButton>
    </ArchiveTitle>
    <MenuBar>
      {["File", "Commands", "Tools", "Favorites", "Options", "Help"].map((m) => (
        <MenuItem key={m}>{m}</MenuItem>
      ))}
    </MenuBar>
    <ToolArea>
      <Grip $h={91} />
      <ToolRows>
        <Toolbar>
          {tools.map((t) => (
            <ToolButton key={t.label} $w={t.w}>{t.icon}{t.label}</ToolButton>
          ))}
          <ToolDivider />
          {extraTools.map((t) => (
            <ToolButton key={t.label} $w={t.w}>{t.icon}{t.label}</ToolButton>
          ))}
        </Toolbar>
        <AddressRow>
          <IconButton $w={32} $h={24} aria-label="Up one level"><Line d="M6 11V1M2 5l4-4 4 4" w={2} color="#8a8a8a" /></IconButton>
          <Grip $h={26} $gap={10} />
          <Address>
            <Books size={16} />
            <PathSelect aria-label="Archive path" defaultValue="zip">
              <option value="zip">TSS.zip - ZIP archive, unpacked size 109,351,230 bytes</option>
            </PathSelect>
            <Line size={8} d="M0 2l4 4 4-4" color="#444" />
          </Address>
        </AddressRow>
      </ToolRows>
    </ToolArea>
    <ListFrame>
      <ListArea>
        <Table>
          <colgroup>
            <col width="257" /><col width="80" /><col width="80" />
            <col width="120" /><col width="100" /><col width="70" />
          </colgroup>
          <thead>
            <tr>
              <NameHead scope="col">
                Name
                <SortMark><Line size={8} d="M0 5l4-4 4 4" color="#555" /></SortMark>
              </NameHead>
              <Th scope="col" $right>Size</Th>
              <Th scope="col" $right>Packed</Th>
              <Th scope="col">Type</Th>
              <Th scope="col">Modified</Th>
              <Th scope="col">CRC32</Th>
            </tr>
          </thead>
          <tbody>
            {entries.map((e) => {
              const selected = e.kind === "up";
              const folder = selected || e.kind === "dir";
              return (
                <Row key={e.name} $selected={selected}>
                  <NameCell $selected={selected}>
                    <NameInner>{entryIcon(e.kind)}{e.name}</NameInner>
                  </NameCell>
                  <Td $right>{e.size}</Td>
                  <Td $right>{e.packed}</Td>
                  <Td>{folder ? "File folder" : "Windows PowerSh..."}</Td>
                  <Td>{selected ? "" : "10/17/2024 12:..."}</Td>
                  <Td>{e.crc}</Td>
                </Row>
              );
            })}
          </tbody>
        </Table>
      </ListArea>
      <VScroll>
        <IconButton $w={16} $h={18} aria-label="Scroll up"><Line size={8} d="M0 6l4-4 4 4" w={2} color="#505050" /></IconButton>
        <VThumb />
        <Spacer />
        <IconButton $w={16} $h={19} aria-label="Scroll down"><Line size={8} d="M0 2l4 4 4-4" w={2} color="#505050" /></IconButton>
      </VScroll>
    </ListFrame>
    <ArchiveStatus>
      <StatusIcons>
        <svg width="16" height="8" viewBox="0 0 16 8"><rect x=".5" y="1" width="15" height="6" rx="1" fill="#3a3f45" stroke="#9a9fa5" /><path d="M3 4h8" stroke="#8e959c" /></svg>
        <svg width="16" height="11" viewBox="0 0 16 11"><circle cx="11" cy="5.500" r="4" fill="#ddd" stroke="#555" strokeWidth="1.500" /><circle cx="11.500" cy="5.500" r="1.200" fill="#555" /><path d="M8 3H3L0 5.500M7 8H3V6" fill="none" stroke="#666" strokeWidth="1.300" /></svg>
      </StatusIcons>
      <Divider $h={22} $c="#d4d4d4" />
      <StatusBlank />
      <Divider $h={22} $c="#d4d4d4" />
      <StatusTotal>Total 8 folders, 15 files, 109,351,230 bytes</StatusTotal>
      <svg width="10" height="20" viewBox="0 0 10 20" fill="#bdbdbd"><path d="M7 10h2v2H7zM4 13h2v2H4zM7 13h2v2H7zM1 16h2v2H1zM4 16h2v2H4zM7 16h2v2H7z" /></svg>
    </ArchiveStatus>
  </Archive>
);

const TaskbarView = () => (
  <Taskbar>
    <Task aria-label="Start">
      <svg width="16" height="16" viewBox="0 0 16 16" fill="#fff"><path d="M0 2.200l6.500-.9v6.300H0zM7.300 1.200L16 0v7.600H7.300zM0 8.400h6.500v6.300L0 13.800zM7.300 8.400H16V16l-8.700-1.200z" /></svg>
    </Task>
    <SearchBox>
      <Line size={16} d="M6.500 9.500L1 15M5.500 6a5 5 0 1 0 10 0 5 5 0 1 0-10 0" w={1.3} color="#222" />
      <SearchInput aria-label="Search" placeholder="Type here to search" />
      <Leaves />
    </SearchBox>
    <Task aria-label="Task view"><TaskView /></Task>
    <TaskGroup>
      <Task aria-label="Edge"><Edge /></Task>
      <Task $open aria-label="File Explorer"><ExplorerIcon /></Task>
      <Task aria-label="Firefox"><Firefox /></Task>
      <Task $open aria-label="Chrome"><ChromeIcon /></Task>
      <Task $open $active aria-label="WinRAR"><Books size={24} /></Task>
    </TaskGroup>
    <Spacer />
    <IconButton $w={24} $h={40} aria-label="Show hidden icons"><Line d="M1 9l5-5 5 5" w={1.4} /></IconButton>
    <IconButton $w={24} $h={40} aria-label="Camera"><Line size={16} d="M3.500 5.500h6v6h-6zM9.500 8l3-2v5l-3-2M3 3.500Q7.500 0 12 3.500M3 13.500q4.500 3.500 9 0" w={1.2} /></IconButton>
    <IconButton $w={24} $h={40} aria-label="Network"><Line size={16} d="M5 3.500h10.500v8H4.500M7 14.500h6M10 12v2.500M.5 1.500h4v4h-4zM2.500 5.500v9" w={1.2} /></IconButton>
    <IconButton $w={24} $h={40} aria-label="Volume"><Line size={16} d="M.5 6v4.500H3l3.500 3v-11L3 6zM8.500 6q1.500 2 0 4.500M10.500 4q3 4 0 8.500M12.500 2.500q4.500 5.500 0 11.500" w={1.1} /></IconButton>
    <Clock>
      <span>10:39 AM</span>
      <span>10/24/2024</span>
    </Clock>
    <IconButton $w={40} $h={40} aria-label="Notifications"><Line size={16} d="M.5 1.500h15v11h-4L8.500 15l-2.500-2.500H.5z" w={1.2} /></IconButton>
    <PeekEdge />
  </Taskbar>
);

export default function App() {
  return (
    <Desktop>
      <GlobalStyle />
      <BrowserWindow />
      <ExplorerWindow />
      <ArchiveWindow />
      <Watermark>
        <span>ANY</span>
        <RunLogo />
        <span>RUN</span>
      </Watermark>
      <TaskbarView />
    </Desktop>
  );
}
